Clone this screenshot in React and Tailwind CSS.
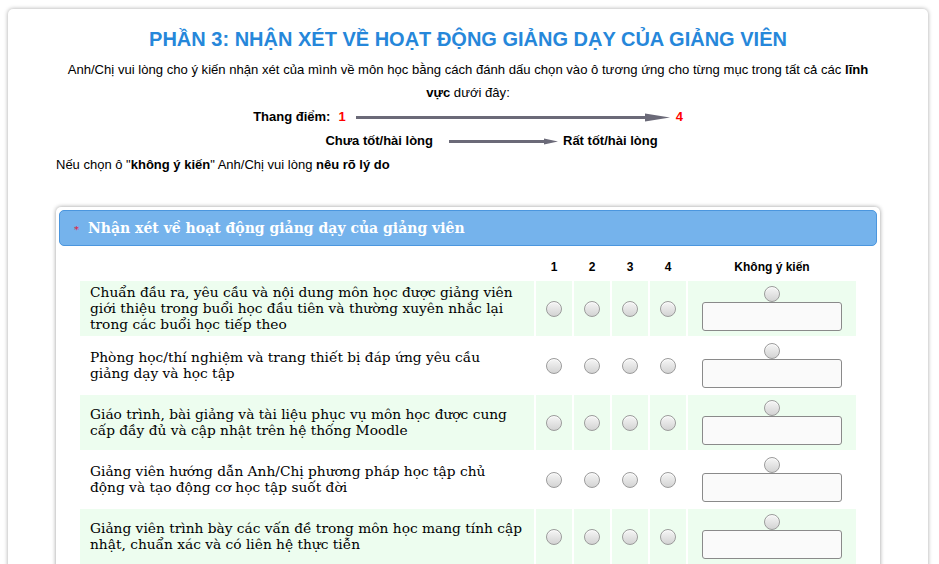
import React from 'react';

const questions = [
    ['Chuẩn đầu ra, yêu cầu và nội dung môn học được giảng viên', 'giới thiệu trong buổi học đầu tiên và thường xuyên nhắc lại', 'trong các buổi học tiếp theo'],
    ['Phòng học/thí nghiệm và trang thiết bị đáp ứng yêu cầu', 'giảng dạy và học tập'],
    ['Giáo trình, bài giảng và tài liệu phục vụ môn học được cung', 'cấp đầy đủ và cập nhật trên hệ thống Moodle'],
    ['Giảng viên hướng dẫn Anh/Chị phương pháp học tập chủ', 'động và tạo động cơ học tập suốt đời'],
    ['Giảng viên trình bày các vấn đề trong môn học mang tính cập', 'nhật, chuẩn xác và có liên hệ thực tiễn'],
];

const Radio = () => (
    <span className="inline-block w-4 h-4 rounded-full border border-[#9b9b9b] bg-gradient-to-b from-[#f6f6f6] to-[#d3d3d3] shadow-[inset_0_1px_0_rgba(255,255,255,0.8)]" />
);

const Arrow = ({ width, head, h }) => (
    <svg width={width} height={h} viewBox={`0 0 ${width} ${h}`} className="block">
        <line x1="0" y1={h / 2} x2={width - head + 2} y2={h / 2} stroke="#6b6a78" strokeWidth="3" />
        <polygon points={`${width - head},0.5 ${width},${h / 2} ${width - head},${h - 0.5}`} fill="#6b6a78" />
    </svg>
);

const App = () => {
    return (
        <div className="min-h-screen bg-white pl-2 pr-[11px] pt-[9px] font-['Liberation_Sans',Arial,sans-serif] text-[13px] text-black">
            <div className="bg-white rounded-[5px] shadow-[0_0_4px_rgba(0,0,0,0.35)] px-12 pt-4 pb-10">
                <h2 className="text-center text-[20px] leading-[28px] font-bold text-[#2687da]">
                    PHẦN 3: NHẬN XÉT VỀ HOẠT ĐỘNG GIẢNG DẠY CỦA GIẢNG VIÊN
                </h2>
                <p className="text-center text-[13.1px] leading-[23px] mt-[5px] mb-[1px] px-[8px]">
                    Anh/Chị vui lòng cho ý kiến nhận xét của mình về môn học bằng cách đánh dấu chọn vào ô tương ứng cho từng mục trong tất cả các <b>lĩnh vực</b> dưới đây:
                </p>
                <div className="flex items-center justify-center h-6 font-bold">
                    <span>Thang điểm:</span>
                    <span className="text-[#ff0000] ml-2">1</span>
                    <span className="ml-[10px]"><Arrow width={314} head={25} h={9} /></span>
                    <span className="text-[#ff0000] ml-[6px]">4</span>
                </div>
                <div className="flex items-center justify-center h-6 font-bold pl-[47px]">
                    <span>Chưa tốt/hài lòng</span>
                    <span className="ml-4"><Arrow width={109} head={14} h={7} /></span>
                    <span className="ml-[5px]">Rất tốt/hài lòng</span>
                </div>
                <p className="leading-6">
                    Nếu chọn ô "<b>không ý kiến</b>" Anh/Chị vui lòng <b>nêu rõ lý do</b>
                </p>

                <div className="mt-[30px] rounded-[5px] bg-white shadow-[0_0_4px_rgba(0,0,0,0.4)] p-[3px] pb-6">
                    <div className="flex items-center h-[36px] rounded-[5px] bg-[#75b3ec] border border-[#4b96de] pl-[14px] font-['DejaVu_Serif',serif]">
                        <span className="text-[#e8112d] text-[10px] leading-none mt-[3px]">*</span>
                        <span className="ml-[9px] text-white font-bold text-[14px]">Nhận xét về hoạt động giảng dạy của giảng viên</span>
                    </div>

                    <div className="px-[19px] mt-[7px]">
                        <table className="w-[780px] border-separate border-spacing-[2px]">
                            <thead>
                                <tr className="h-6 text-[12px] font-bold">
                                    <th className="w-[454px]"></th>
                                    <th className="w-9">1</th>
                                    <th className="w-9">2</th>
                                    <th className="w-9">3</th>
                                    <th className="w-9">4</th>
                                    <th className="w-[168px]">Không ý kiến</th>
                                </tr>
                            </thead>
                            <tbody>
                                {questions.map((lines, i) => {
                                    const bg = i % 2 === 0 ? 'bg-[#edfdef]' : 'bg-white';
                                    return (
                                        <tr key={i} className="h-[55px]">
                                            <td className={`${bg} pl-[10px] pr-[6px] align-middle font-['DejaVu_Serif',serif] text-[13.75px] leading-[16px] pb-[1px]`}>
                                                {lines.map((l, j) => (
                                                    <span key={j} className="block whitespace-nowrap">{l}</span>
                                                ))}
                                            </td>
                                            {[1, 2, 3, 4].map((n) => (
                                                <td key={n} className={`${bg} text-center align-middle`}>
                                                    <span className="flex justify-center"><Radio /></span>
                                                </td>
                                            ))}
                                            <td className={`${bg} py-[5px]`}>
                                                <div className="flex flex-col items-center">
                                                    <Radio />
                                                    <input
                                                        type="text"
                                                        className="w-[140px] h-[29px] rounded-[3px] border border-[#8a8a8a] bg-[#fafafa]"
                                                    />
                                                </div>
                                            </td>
                                        </tr>
                                    );
                                })}
                            </tbody>
                        </table>
                    </div>
                </div>
            </div>
        </div>
    );
};

export default App;
